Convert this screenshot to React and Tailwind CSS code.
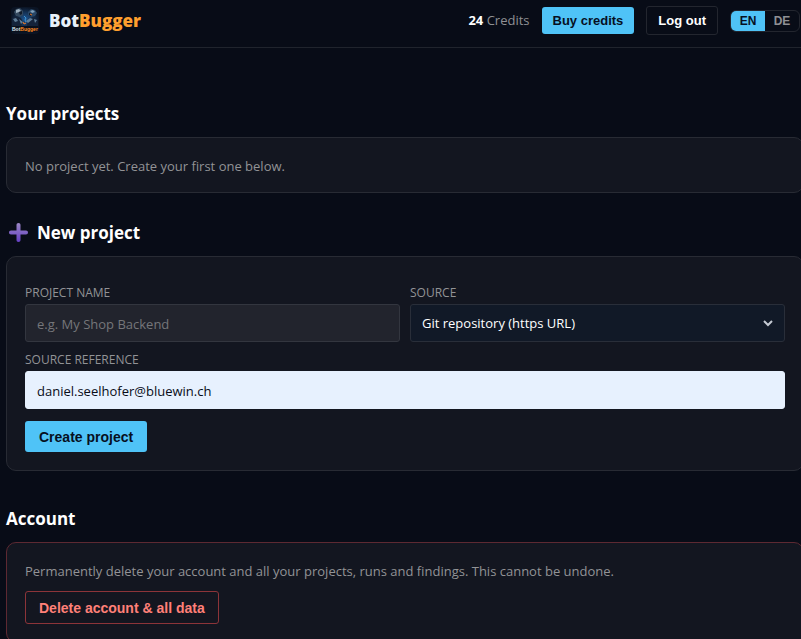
import { useState } from 'react';

const Logo = () => (
  <svg width="28" height="27" viewBox="0 0 28 27" aria-hidden="true" className="rounded-sm">
    <defs>
      <radialGradient id="logoGlow">
        <stop offset="0" stopColor="#1f5590" />
        <stop offset="1" stopColor="#0b1424" />
      </radialGradient>
    </defs>
    <rect width="28" height="27" fill="#0b1424" />
    <ellipse cx="14" cy="12" rx="14" ry="12" fill="url(#logoGlow)" />
    {/* left robot */}
    <path d="M3 5l2-3 4-1 3 3v4l-3 2-4-1z" fill="#34495f" />
    <path d="M5 3l3-1 2 2-2 1-3 1z" fill="#9fb1c0" />
    <path d="M8 5l3-1v3l-2 1z" fill="#101b2b" />
    <path d="M1 11l4-2 5 2 2 4-2 4H1z" fill="#14233a" />
    <path d="M2 12l3-1 2 3-3 1zM8 12l4 3-2 2z" fill="#5f7d97" />
    {/* right bug */}
    <path d="M17 5l3-3 4 1 2 3-2 3-4 1-3-2z" fill="#294665" />
    <path d="M19 4l3-1 2 2-3 1z" fill="#7fa0bb" />
    <path d="M18 6l3 1-1 2-2-1z" fill="#0e1828" />
    <path d="M17 12l5-2 5 3v6H16z" fill="#14233a" />
    <path d="M15 14l4-3 3 1-5 4zM23 12l3 1-2 3z" fill="#5f7d97" />
    <path d="M19 7l2 1M12 15l1 2 2-1" stroke="#f17b24" fill="none" />
    <path d="M13 9l2 2-1 2 1 2" stroke="#4cb9ff" strokeWidth=".7" fill="none" />
    <rect x="1" y="19" width="26" height="6" fill="#09101c" />
    <text x="1" y="24" fontFamily="Liberation Sans, sans-serif" fontSize="5" fontWeight="700" fill="#dce6ee">
      Bot<tspan fill="#ff8a1f">Bugger</tspan>
    </text>
  </svg>
);

const PlusIcon = () => (
  <svg width="19" height="19" viewBox="0 0 19 19" aria-hidden="true">
    <defs>
      <linearGradient id="plusFill" x1="0" y1="0" x2="0" y2="1">
        <stop offset="0" stopColor="#9b87c5" />
        <stop offset="1" stopColor="#6540c4" />
      </linearGradient>
    </defs>
    <path
      d="M9.5 0C10.8 0 11.5.8 11.5 2v5.5H17c1.2 0 2 .8 2 2s-.8 2-2 2h-5.500V17c0 1.200-.7 2-2 2s-2-.8-2-2v-5.500H2c-1.200 0-2-.8-2-2s.8-2 2-2h5.500V2c0-1.200.7-2 2-2z"
      fill="url(#plusFill)"
    />
  </svg>
);

const Header = ({ lang, setLang }) => (
  <header className="flex h-12 items-center justify-between border-b border-[#20242d] pl-[11px] pr-px pb-[6px]">
    <a href="#" className="flex items-center gap-[10px]">
      <Logo />
      <span className="text-[17px] font-extrabold text-[#e8f1fa]">
        Bot<span className="text-[#ff9f2e]">Bugger</span>
      </span>
    </a>
    <div className="flex items-center gap-3">
      <span className="text-[13px] text-[#8f9094]">
        <b className="text-white">24</b> Credits
      </span>
      <button className="h-[27px] rounded-[3px] bg-[#4fc3f7] px-[11px] font-['Liberation_Sans',sans-serif] text-[13px] font-bold text-[#06101f]">
        Buy credits
      </button>
      <button className="h-[29px] rounded-[3px] border border-[#23262f] px-[11px] font-['Liberation_Sans',sans-serif] text-[13px] font-bold text-white">
        Log out
      </button>
      <div className="flex h-[22px] overflow-hidden rounded-md border border-[#23262f] font-['Liberation_Sans',sans-serif] text-xs font-bold">
        {['EN', 'DE'].map(code => (
          <button
            key={code}
            onClick={() => setLang(code)}
            className={lang === code ? 'w-[34px] bg-[#4fc3f7] text-[#06101f]' : 'w-[34px] text-[#8f9094]'}
          >
            {code}
          </button>
        ))}
      </div>
    </div>
  </header>
);

const App = () => {
  const [lang, setLang] = useState('EN');
  const [formData, setFormData] = useState({ name: '', source: 'git', reference: 'daniel.seelhofer@bluewin.ch' });

  const update = (e) => setFormData({ ...formData, [e.target.name]: e.target.value });

  return (
    <div className="min-h-screen overflow-hidden bg-[#080c17] font-['Open_Sans','Noto_Sans',sans-serif] text-white">
      <Header lang={lang} setLang={setLang} />

      <main className="-mr-[3px] pb-6 pl-[6px] pt-[52px]">
        <section>
          <h2 className="mb-[10px] text-[17px] leading-[27px] font-bold">Your projects</h2>
          <div className="rounded-[10px] border border-[#282b34] bg-[#131620] px-[18px] pt-[17px] pb-[15px]">
            <p className="text-[13px] leading-[22px] text-[#929396]">No project yet. Create your first one below.</p>
          </div>
        </section>

        <section className="mt-[26px]">
          <h2 className="mb-[10px] flex items-center gap-[9px] pl-[3px] text-[17px] leading-[27px] font-bold">
            <PlusIcon />
            New project
          </h2>
          <form
            onSubmit={e => e.preventDefault()}
            className="rounded-[10px] border border-[#282b34] bg-[#131620] px-[18px] pb-[18px] pt-[27px]"
          >
            <div className="grid grid-cols-2 gap-x-[10px] gap-y-[9px]">
              <div className="flex flex-col gap-[2px]">
                <label htmlFor="name" className="text-xs leading-[18px] text-[#929396] uppercase">Project name</label>
                <input
                  id="name"
                  name="name"
                  value={formData.name}
                  onChange={update}
                  placeholder="e.g. My Shop Backend"
                  className="h-[38px] w-full rounded-[3px] border border-[#33363f] bg-[#22242d] px-[11px] pt-[2px] text-[13px] outline-none placeholder:text-[#75767a]"
                />
              </div>
              <div className="flex flex-col gap-[2px]">
                <label htmlFor="source" className="text-xs leading-[18px] text-[#929396] uppercase">Source</label>
                <div className="relative">
                  <select
                    id="source"
                    name="source"
                    value={formData.source}
                    onChange={update}
                    className="h-[38px] w-full appearance-none rounded-[3px] border border-[#292e39] bg-[#111927] px-[11px] pt-[2px] text-[13px] outline-none"
                  >
                    <option value="git">Git repository (https URL)</option>
                  </select>
                  <svg
                    width="10"
                    height="7"
                    viewBox="0 0 10 7"
                    aria-hidden="true"
                    className="pointer-events-none absolute right-3 top-4"
                  >
                    <path d="M1 1l4 4 4-4" fill="none" stroke="#c5cad3" strokeWidth="2" />
                  </svg>
                </div>
              </div>
              <div className="col-span-2 flex flex-col gap-[2px]">
                <label htmlFor="reference" className="text-xs leading-[18px] text-[#929396] uppercase">Source reference</label>
                <input
                  id="reference"
                  name="reference"
                  value={formData.reference}
                  onChange={update}
                  className="h-[38px] w-full rounded-[3px] border border-[#e7f1fe] bg-[#e7f1fe] px-[11px] pt-[2px] text-[13px] text-[#080c17] outline-none"
                />
              </div>
            </div>
            <button
              type="submit"
              className="mt-3 block h-[31px] rounded-[3px] bg-[#4fc3f7] px-[14px] font-['Liberation_Sans',sans-serif] text-sm font-bold text-[#06101f]"
            >
              Create project
            </button>
          </form>
        </section>

        <section className="mt-[34px]">
          <h2 className="mb-[10px] text-[17px] leading-[27px] font-bold">Account</h2>
          <div className="rounded-[10px] border border-[#5d2932] bg-[#131620] px-[18px] pb-[18px] pt-[17px]">
            <p className="text-[13px] leading-[22px] text-[#929396]">
              Permanently delete your account and all your projects, runs and findings. This cannot be undone.
            </p>
            <button className="mt-[9px] block h-[33px] rounded-[3px] border border-[#8c3439] px-[13px] font-['Liberation_Sans',sans-serif] text-sm font-bold text-[#ff8078]">
              Delete account &amp; all data
            </button>
          </div>
        </section>
      </main>
    </div>
  );
};

export default App;
